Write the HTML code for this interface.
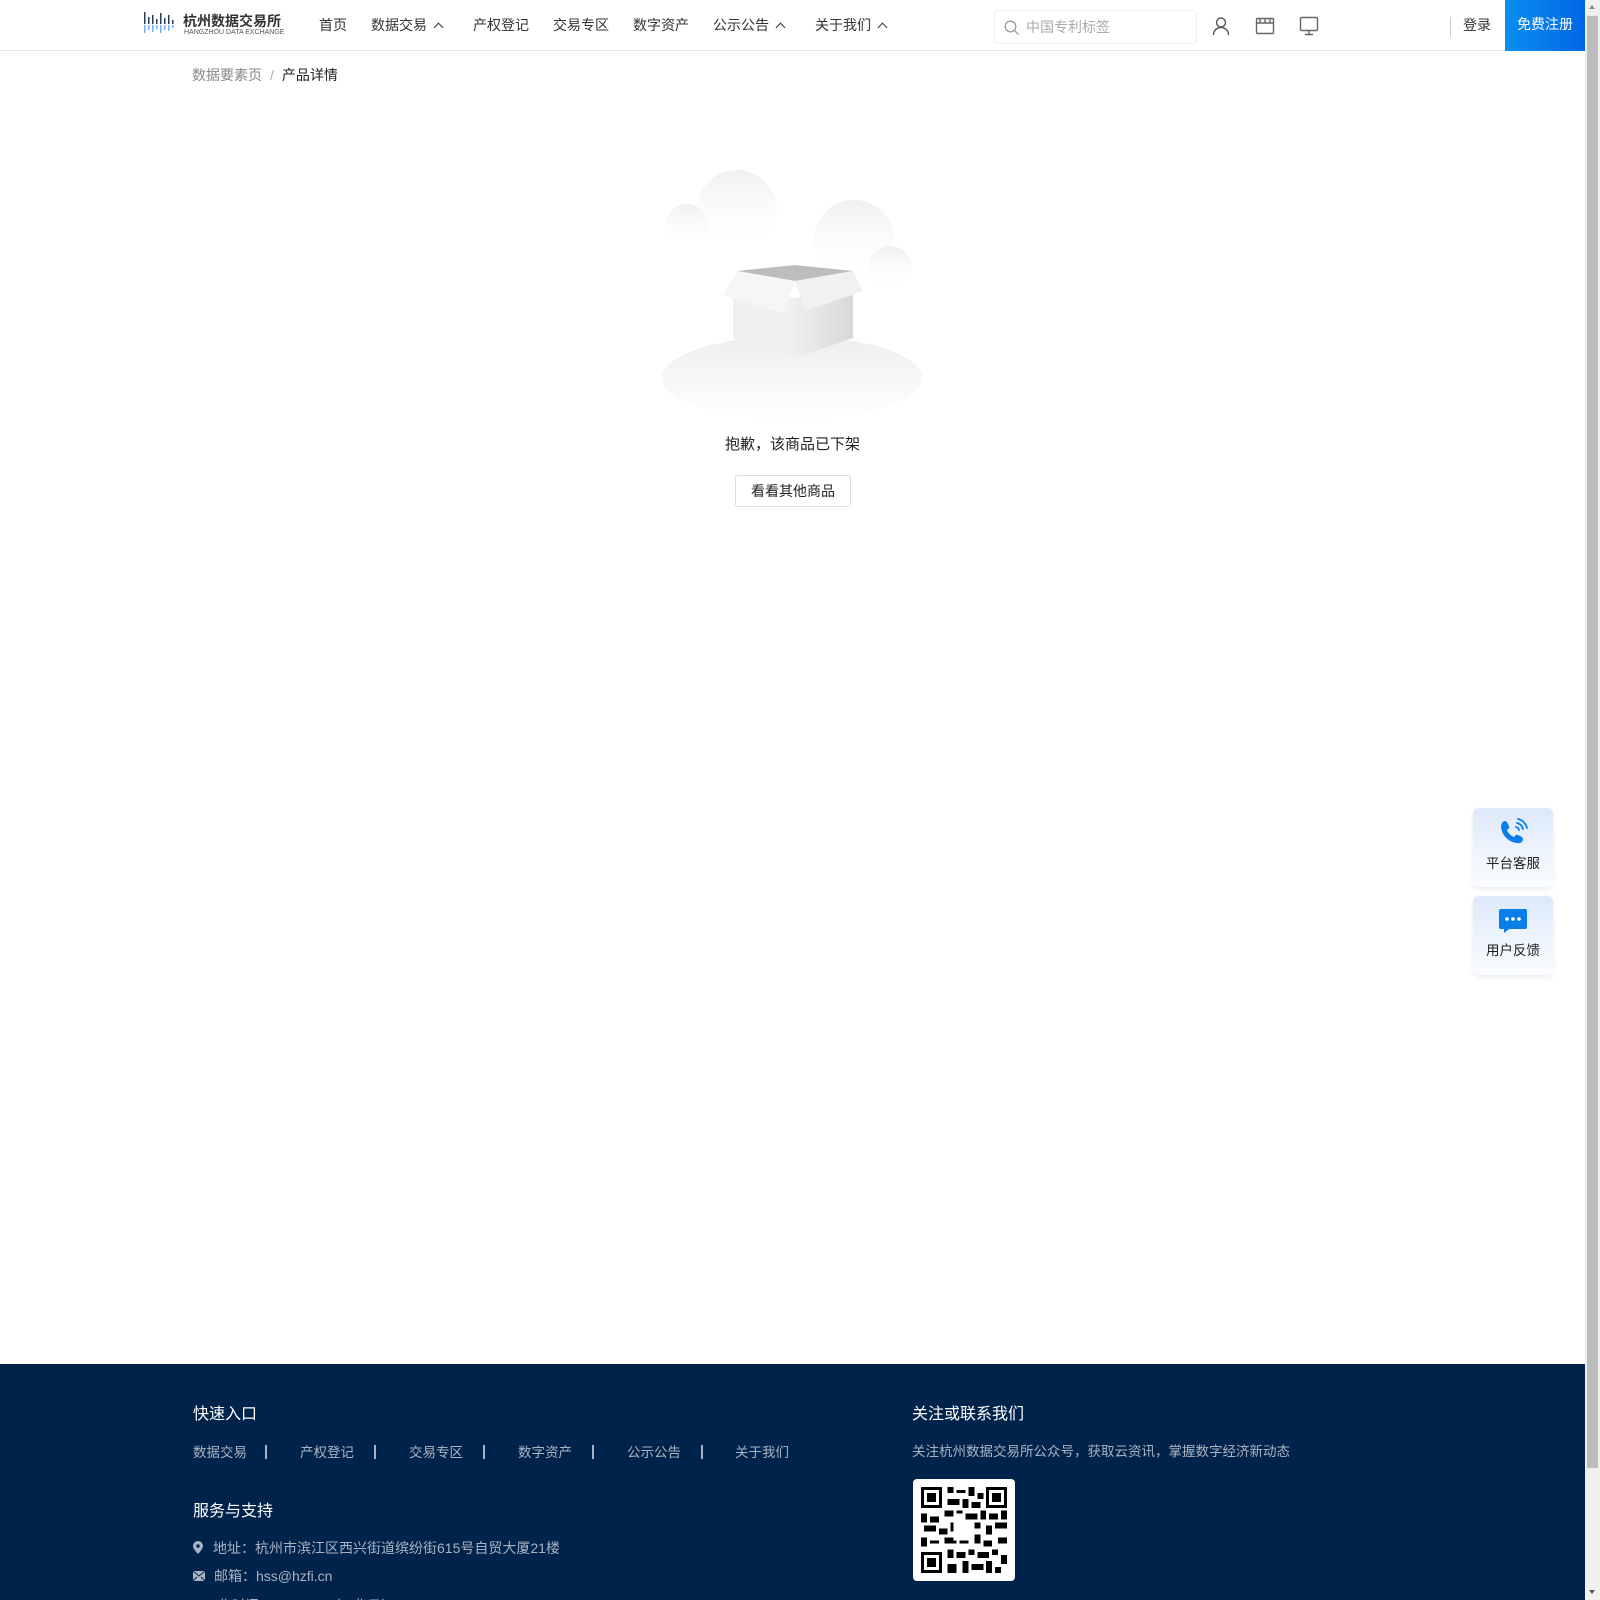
<!DOCTYPE html>
<html><head><meta charset="utf-8">
<style>
*{margin:0;padding:0;box-sizing:border-box}
html,body{width:1600px;height:1600px;overflow:hidden;background:#fff;font-family:"Liberation Sans","Noto Sans CJK SC",sans-serif;color:#333}
.page{position:absolute;left:0;top:0;width:1585px;height:1600px;overflow:hidden}
.hdr{position:absolute;left:0;top:0;width:1585px;height:51px;border-bottom:1px solid #e6e6e6;background:#fff}
.nav{position:absolute;top:15px;font-size:14px;color:#333;white-space:nowrap}
.caret{display:inline-block;width:7px;height:7px;border-left:1.6px solid #333;border-top:1.6px solid #333;transform:rotate(45deg);margin-left:8px;position:relative;top:1px}
.search{position:absolute;left:994px;top:10px;width:203px;height:34px;border:1px solid #eee;border-radius:4px;font-size:14px;color:#aaa;line-height:32px;padding-left:31px}
.reg{position:absolute;left:1505px;top:0;width:80px;height:51px;background:linear-gradient(90deg,#0a8ef0,#0066e6);color:#fff;font-size:14px;line-height:48px;text-align:center}
.foot{position:absolute;left:0;top:1364px;width:1585px;height:236px;background:#00234b;color:#c6cdd8}
.ft{position:absolute;font-size:16px;color:#fff}
.fl{position:absolute;font-size:13.5px;color:#aab3c2;white-space:nowrap}
.sep{position:absolute;top:81px;width:2px;height:14px;background:#aab3c2}
.side{position:absolute;left:1473px;width:80px;height:79px;border-radius:6px;background:linear-gradient(#dce9fb,#fbfdff);box-shadow:0 2px 6px rgba(0,0,0,.08);text-align:center;font-size:13.5px;color:#222}
.sb{position:absolute;left:1585px;top:0;width:15px;height:1600px;background:#f0f0f0}
</style></head><body>
<div class="page">
<div class="hdr">
  <svg style="position:absolute;left:143px;top:11px" width="40" height="24" viewBox="0 0 40 24">
    <g fill="#2b3a55"><rect x="1" y="1" width="1.5" height="12"/><rect x="5" y="6" width="1.5" height="7"/><rect x="9" y="4" width="1.5" height="9"/><rect x="13" y="8" width="1.5" height="5"/><rect x="17" y="2" width="1.5" height="11"/><rect x="21" y="7" width="1.5" height="6"/><rect x="25" y="4" width="1.5" height="9"/><rect x="29" y="9" width="1.5" height="4"/></g>
    <g fill="#3d8ef5" opacity=".7"><rect x="1" y="14" width="1.5" height="8"/><rect x="5" y="14" width="1.5" height="5"/><rect x="9" y="14" width="1.5" height="7"/><rect x="13" y="14" width="1.5" height="4"/><rect x="17" y="14" width="1.5" height="8"/><rect x="21" y="14" width="1.5" height="5"/><rect x="25" y="14" width="1.5" height="6"/><rect x="29" y="14" width="1.5" height="3"/></g>
  </svg>
  <div style="position:absolute;left:183px;top:11px;font-size:14px;font-weight:bold;color:#333">杭州数据交易所</div>
  <div style="position:absolute;left:184px;top:29px;font-size:7px;color:#555">HANGZHOU DATA EXCHANGE</div>
  <div class="nav" style="left:319px">首页</div>
  <div class="nav" style="left:371px">数据交易<span class="caret"></span></div>
  <div class="nav" style="left:473px">产权登记</div>
  <div class="nav" style="left:553px">交易专区</div>
  <div class="nav" style="left:633px">数字资产</div>
  <div class="nav" style="left:713px">公示公告<span class="caret"></span></div>
  <div class="nav" style="left:815px">关于我们<span class="caret"></span></div>
  <div class="search">中国专利标签
    <svg style="position:absolute;left:9px;top:9px" width="16" height="16" viewBox="0 0 16 16"><circle cx="6.5" cy="6.5" r="5.3" fill="none" stroke="#999" stroke-width="1.3"/><path d="M10.5 10.5L14.5 14.5" stroke="#999" stroke-width="1.3"/></svg>
  </div>
  <svg style="position:absolute;left:1211px;top:16px" width="20" height="20" viewBox="0 0 20 20" fill="none" stroke="#555" stroke-width="1.4"><circle cx="10" cy="6.5" r="4.5"/><path d="M2.5 19c0-4.5 3.3-7.5 7.5-7.5s7.5 3 7.5 7.5"/></svg>
  <svg style="position:absolute;left:1255px;top:17px" width="20" height="18" viewBox="0 0 20 18" fill="none" stroke="#666" stroke-width="1.4"><rect x="1.5" y="1.5" width="17" height="15" rx="1"/><path d="M1.5 6h17M5 1.5v4.5M10 1.5v4.5M15 1.5v4.5"/></svg>
  <svg style="position:absolute;left:1299px;top:16px" width="20" height="20" viewBox="0 0 20 20" fill="none" stroke="#666" stroke-width="1.4"><rect x="1.5" y="1.5" width="17" height="13" rx="1"/><path d="M10 14.5v4M6 18.5h8"/></svg>
  <div style="position:absolute;left:1450px;top:17px;width:1px;height:20px;background:#ccc"></div>
  <div class="nav" style="left:1463px">登录</div>
  <div class="reg">免费注册</div>
</div>
<div style="position:absolute;left:192px;top:65px;font-size:14px;color:#888">数据要素页<span style="margin:0 8px;color:#aaa">/</span><span style="color:#222">产品详情</span></div>

<svg style="position:absolute;left:650px;top:170px" width="280" height="250" viewBox="0 0 280 250">
  <defs>
    <linearGradient id="cl" x1="0" y1="0" x2="0" y2="1"><stop offset="0" stop-color="#f0f0f0"/><stop offset="1" stop-color="#fff" stop-opacity="0"/></linearGradient>
    <linearGradient id="hill" x1="0" y1="0" x2="0" y2="1"><stop offset="0" stop-color="#eeeeee"/><stop offset="1" stop-color="#fff"/></linearGradient>
    <linearGradient id="bl" x1="0" y1="0" x2="1" y2="0"><stop offset="0" stop-color="#eeeeee"/><stop offset="1" stop-color="#d8d8d8"/></linearGradient>
  </defs>
  <circle cx="87" cy="40" r="40" fill="url(#cl)"/>
  <circle cx="37" cy="56" r="22" fill="url(#cl)"/>
  <circle cx="204" cy="70" r="40" fill="url(#cl)"/>
  <circle cx="240" cy="98" r="22" fill="url(#cl)"/>
  <g transform="translate(15,3)">
  <ellipse cx="127" cy="205" rx="130" ry="42" fill="url(#hill)"/>
  <path d="M72 98 L130 92 L188 98 L130 108 Z" fill="#bdbdbd"/>
  <path d="M68 110 L130 125 L130 185 L68 165 Z" fill="#f0f0f0"/>
  <path d="M130 125 L188 110 L188 165 L130 185 Z" fill="url(#bl)"/>
  <path d="M72 98 L130 108 L118 140 L58 122 Z" fill="#f6f6f6"/>
  <path d="M130 108 L188 98 L198 118 L140 138 Z" fill="#f1f1f1"/>
  </g>
</svg>
<div style="position:absolute;left:0;width:1585px;top:433px;text-align:center;font-size:15px;color:#222">抱歉，该商品已下架</div>
<div style="position:absolute;left:735px;top:475px;width:116px;height:32px;border:1px solid #ddd;border-radius:3px;font-size:14px;line-height:30px;text-align:center;color:#222">看看其他商品</div>

<div class="side" style="top:808px">
  <svg style="margin-top:10px" width="30" height="30" viewBox="0 0 30 30"><path d="M7 3c2 0 3 3 4 5s-1 3-2 4c1 3 4 6 7 7 1-1 2-3 4-2s5 2 5 4c0 3-3 5-6 4C10 24 4 17 3 9 3 6 5 3 7 3z" fill="#0a7ee8"/><path d="M18 9a4 4 0 0 1 3 3M19 5a8 8 0 0 1 6 6M20 1a12 12 0 0 1 9 9" fill="none" stroke="#0a7ee8" stroke-width="1.8" stroke-linecap="round"/></svg>
  <div style="margin-top:1px">平台客服</div>
</div>
<div class="side" style="top:896px">
  <svg style="margin-top:12px" width="30" height="26" viewBox="0 0 30 26"><path d="M3 1h24a2 2 0 0 1 2 2v16a2 2 0 0 1-2 2H11l-5 4v-4H3a2 2 0 0 1-2-2V3a2 2 0 0 1 2-2z" fill="#0a7ee8"/><circle cx="9" cy="11" r="1.8" fill="#fff"/><circle cx="15" cy="11" r="1.8" fill="#fff"/><circle cx="21" cy="11" r="1.8" fill="#fff"/></svg>
  <div style="margin-top:2px">用户反馈</div>
</div>

<div class="foot">
  <div class="ft" style="left:193px;top:36px">快速入口</div>
  <div class="fl" style="left:193px;top:77px">数据交易</div><div class="sep" style="left:265px"></div>
  <div class="fl" style="left:300px;top:77px">产权登记</div><div class="sep" style="left:374px"></div>
  <div class="fl" style="left:409px;top:77px">交易专区</div><div class="sep" style="left:483px"></div>
  <div class="fl" style="left:518px;top:77px">数字资产</div><div class="sep" style="left:592px"></div>
  <div class="fl" style="left:627px;top:77px">公示公告</div><div class="sep" style="left:701px"></div>
  <div class="fl" style="left:735px;top:77px">关于我们</div>
  <div class="ft" style="left:193px;top:133px">服务与支持</div>
  <div class="fl" style="left:193px;top:174px;font-size:14px"><svg width="10" height="13" viewBox="0 0 10 13" style="margin-right:10px;vertical-align:-1px"><path d="M5 0a5 5 0 0 1 5 5c0 3-5 8-5 8S0 8 0 5a5 5 0 0 1 5-5z" fill="#aab3c2"/><circle cx="5" cy="5" r="1.8" fill="#00234b"/></svg>地址：杭州市滨江区西兴街道缤纷街615号自贸大厦21楼</div>
  <div class="fl" style="left:193px;top:202px;font-size:14px"><svg width="12" height="10" viewBox="0 0 12 10" style="margin-right:9px"><rect width="12" height="10" fill="#aab3c2"/><path d="M0 0l6 5 6-5M0 10l4-4M12 10l-4-4" stroke="#00234b" fill="none"/></svg>邮箱：hss@hzfi.cn</div>
  <div class="fl" style="left:193px;top:230px">● 工作时间 9:00-17:30（工作日）</div>
  <div class="ft" style="left:912px;top:36px">关注或联系我们</div>
  <div class="fl" style="left:912px;top:76px">关注杭州数据交易所公众号，获取云资讯，掌握数字经济新动态</div>
  <div style="position:absolute;left:913px;top:115px;width:102px;height:102px;background:#fff;border-radius:4px">
    <svg style="position:absolute;left:8px;top:8px" width="86" height="86" viewBox="0 0 29 29" shape-rendering="crispEdges">
      <g fill="#000">
      <path d="M0 0h7v7H0zM22 0h7v7h-7zM0 22h7v7H0z"/>
      <path d="M9 0h2v2H9zM12 1h3v1h-3zM16 0h2v3h-2zM19 2h2v2h-2zM9 4h4v2H9zM14 4h2v3h-2zM17 5h3v2h-3zM8 8h3v2H8zM12 8h2v1h-2zM15 9h4v2h-4zM20 8h2v3h-2zM23 9h3v2h-3zM27 8h2v3h-2zM0 9h2v3H0zM3 10h3v2H3zM1 13h4v2H1zM6 14h3v2H6zM10 12h2v3h-2zM17 12h3v2h-3zM22 13h2v3h-2zM25 12h4v2h-4zM0 17h2v3H0zM3 18h3v1H3zM8 17h4v2H8zM13 17h3v2h-3zM18 16h2v3h-2zM21 18h3v2h-3zM26 17h3v2h-3zM9 21h2v3H9zM12 22h3v2h-3zM16 21h2v2h-2zM19 22h4v2h-4zM24 21h2v2h-2zM27 23h2v3h-2zM9 26h3v3H9zM14 25h2v4h-2zM17 26h4v2h-4zM22 25h2v4h-2zM25 27h2v2h-2z"/>
      </g>
      <g fill="#fff"><path d="M1 1h5v5H1zM23 1h5v5h-5zM1 23h5v5H1z"/></g>
      <g fill="#000"><path d="M2 2h3v3H2zM24 2h3v3h-3zM2 24h3v3H2z"/></g>
      <rect x="11" y="11" width="7" height="7" fill="#fff"/>
    </svg>
  </div>
  <div class="fl" style="left:912px;top:232px">◯ 官网动态</div>
  <div class="fl" style="left:1144px;top:232px">♡ 官方企业</div>
</div>
</div>
<div class="sb"><div style="position:absolute;left:2px;top:16px;width:11px;height:1452px;background:#bcbcbc"></div>
<div style="position:absolute;left:4px;top:5px;border:3.5px solid transparent;border-bottom:4px solid #888;border-top:0"></div>
<div style="position:absolute;left:4px;top:1590px;border:3.5px solid transparent;border-top:4px solid #555;border-bottom:0"></div></div>
</body></html>
